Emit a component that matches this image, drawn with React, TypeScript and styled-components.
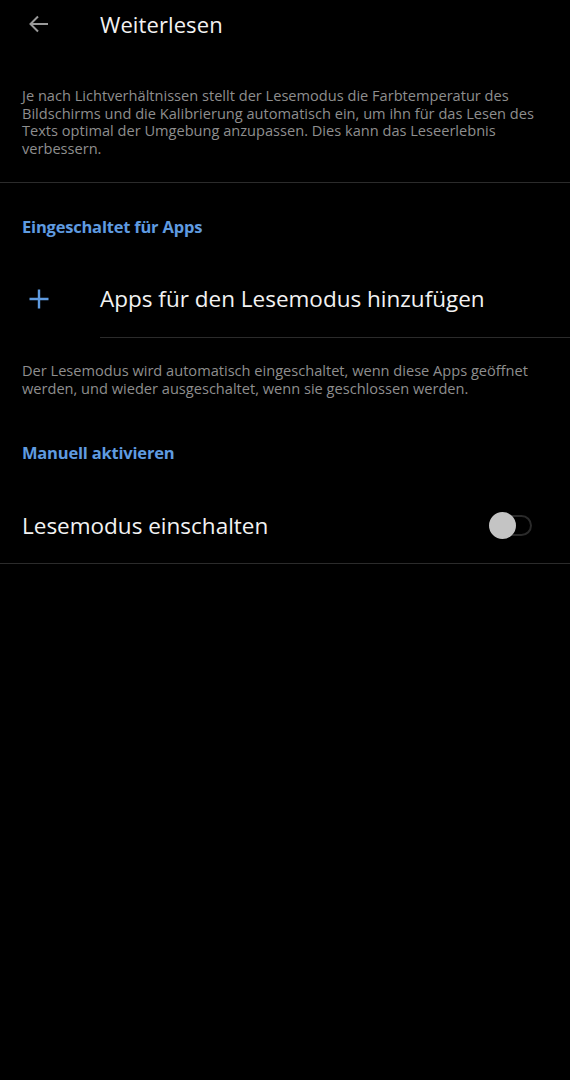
import React, { useState } from 'react';
import styled, { createGlobalStyle } from 'styled-components';

const GlobalStyle = createGlobalStyle`
  html, body {
    margin: 0;
    padding: 0;
    background: #000;
  }
  body {
    font-family: "Open Sans", "Noto Sans", sans-serif;
    color: #fff;
  }
`;

const Screen = styled.div`
  width: 570px;
  min-height: 1080px;
  background: #000;
  display: flex;
  flex-direction: column;
`;

const Toolbar = styled.div`
  height: 48px;
  display: flex;
  align-items: center;
`;

const BackButton = styled.div`
  width: 78px;
  display: flex;
  justify-content: center;
  color: #9a9a9a;
`;

const Title = styled.h1`
  margin: 0;
  padding-left: 22px;
  font-size: 22px;
  font-weight: 400;
  color: #f2f2f2;
  letter-spacing: 0.1px;
`;

const Description = styled.p<{ top: number }>`
  margin: ${({ top }) => top}px 0 0;
  padding: 0 20px 0 22px;
  font-size: 14.6px;
  line-height: 17.7px;
  color: #8e8e8e;
`;

const Divider = styled.div<{ indent?: number; top?: number }>`
  height: 1px;
  background: #2b2b2b;
  margin-left: ${({ indent }) => indent ?? 0}px;
  margin-top: ${({ top }) => top ?? 0}px;
`;

const SectionHeader = styled.div<{ top: number }>`
  margin-top: ${({ top }) => top}px;
  padding-left: 22px;
  font-size: 16.5px;
  font-weight: 700;
  color: #5f9be0;
  letter-spacing: -0.2px;
`;

const AddRow = styled.div`
  display: flex;
  align-items: center;
  height: 76px;
  margin-top: 23px;
`;

const AddIcon = styled.div`
  width: 78px;
  display: flex;
  justify-content: center;
  color: #5f9be0;
`;

const RowLabel = styled.div<{ pad: number }>`
  flex: 1;
  padding-left: ${({ pad }) => pad}px;
  font-size: 22.5px;
  color: #f2f2f2;
`;

const SwitchRow = styled.div`
  display: flex;
  align-items: center;
  height: 70px;
  margin-top: 26px;
  padding-right: 38px;
`;

const Track = styled.div<{ on: boolean }>`
  position: relative;
  width: 42px;
  height: 21px;
  border-radius: 11px;
  border: 2px solid ${({ on }) => (on ? '#5f9be0' : '#2a2a2a')};
  box-sizing: border-box;
  cursor: pointer;
`;

const Knob = styled.div<{ on: boolean }>`
  position: absolute;
  top: 50%;
  left: ${({ on }) => (on ? '14.5px' : '-3.5px')};
  width: 27px;
  height: 27px;
  margin-top: -13.5px;
  border-radius: 50%;
  background: ${({ on }) => (on ? '#5f9be0' : '#c4c4c4')};
`;

const App: React.FC = () => {
  const [enabled, setEnabled] = useState(false);

  return (
    <Screen>
      <GlobalStyle />
      <Toolbar>
        <BackButton>
          <svg width="24" height="24" viewBox="0 0 24 24" fill="none" stroke="currentColor" strokeWidth="2">
            <path d="M21 12H3.5M11 4.5L3.5 12l7.5 7.5" />
          </svg>
        </BackButton>
        <Title>Weiterlesen</Title>
      </Toolbar>

      <Description top={39}>
        Je nach Lichtverhältnissen stellt der Lesemodus die Farbtemperatur des
        <br />
        Bildschirms und die Kalibrierung automatisch ein, um ihn für das Lesen des
        <br />
        Texts optimal der Umgebung anzupassen. Dies kann das Leseerlebnis
        <br />
        verbessern.
      </Description>
      <Divider top={24} />

      <SectionHeader top={32}>Eingeschaltet für Apps</SectionHeader>
      <AddRow>
        <AddIcon>
          <svg width="24" height="24" viewBox="0 0 24 24" fill="none" stroke="currentColor" strokeWidth="2.4">
            <path d="M12 2.5v19M2.5 12h19" />
          </svg>
        </AddIcon>
        <RowLabel pad={22}>Apps für den Lesemodus hinzufügen</RowLabel>
      </AddRow>
      <Divider indent={100} />

      <Description top={24}>
        Der Lesemodus wird automatisch eingeschaltet, wenn diese Apps geöffnet
        <br />
        werden, und wieder ausgeschaltet, wenn sie geschlossen werden.
      </Description>

      <SectionHeader top={44}>Manuell aktivieren</SectionHeader>
      <SwitchRow>
        <RowLabel pad={22}>Lesemodus einschalten</RowLabel>
        <Track on={enabled} onClick={() => setEnabled(!enabled)}>
          <Knob on={enabled} />
        </Track>
      </SwitchRow>
      <Divider top={3} />
    </Screen>
  );
};

export default App;
